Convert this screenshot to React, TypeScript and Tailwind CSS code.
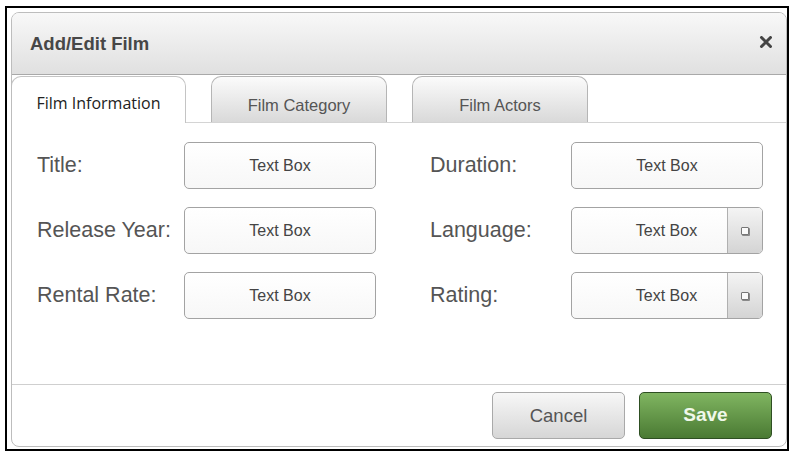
import type { ReactNode } from 'react';

const arial = "font-['Liberation_Sans',Arial,sans-serif]";

function TextBox({ dropdown = false }: { dropdown?: boolean }) {
  return (
    <div className="flex h-[47px] w-[192px] overflow-hidden rounded-[5px] border border-[#a3a3a3] bg-[linear-gradient(180deg,#ffffff,#f7f7f7)]">
      <div
        className={`flex flex-1 items-center justify-center text-[16px] text-[#444] ${arial} ${dropdown ? 'pl-[34px]' : ''}`}
      >
        Text Box
      </div>
      {dropdown && (
        <div className="flex w-[35px] items-center justify-center border-l border-[#b0b0b0] bg-[linear-gradient(180deg,#f4f4f4,#d4d4d4)]">
          <div className="h-[8px] w-[8px] rounded-[1px] border border-[#777] bg-[#fafafa] shadow-[1px_1px_0_#8a8a8a]" />
        </div>
      )}
    </div>
  );
}

function Label({ children }: { children: ReactNode }) {
  return <div className={`flex h-[47px] items-center text-[21.5px] text-[#555] ${arial}`}>{children}</div>;
}

function Tab({ label, active = false }: { label: string; active?: boolean }) {
  if (active) {
    return (
      <div className="relative -mb-px -ml-px flex h-[47px] w-[175px] items-center justify-center rounded-t-[10px] border border-b-0 border-[#c4c4c4] bg-white pt-[6px] font-['Open_Sans',sans-serif] text-[16px] text-[#222]">
        {label}
      </div>
    );
  }
  return (
    <div
      className={`flex h-[46px] w-[176px] items-center justify-center rounded-t-[10px] border border-b-0 border-[#b5b5b5] bg-[linear-gradient(180deg,#fbfbfb,#d9d9d9)] pt-[12px] text-[16.5px] text-[#555] ${arial}`}
    >
      {label}
    </div>
  );
}

export default function App() {
  return (
    <div className="h-[462px] w-[797px] bg-white pl-[5px] pt-[6px]">
      <div className="h-[445px] w-[784px] border-2 border-black pl-[4px] pt-[4px]">
        <div className="flex h-[435px] w-[776px] flex-col overflow-hidden rounded-[8px] border border-[#bdbdbd] bg-white">
          <div className="flex h-[62px] shrink-0 items-center justify-between border-b border-[#a9a9a9] bg-[linear-gradient(180deg,#f8f8f8,#e0e0e0)] pl-[18px] pr-[13px]">
            <span className={`text-[18.5px] font-bold text-[#474747] ${arial}`}>Add/Edit Film</span>
            <svg width="14" height="12" viewBox="0 0 14 12" className="mt-[-4px]">
              <path d="M2.5 1.5 L11.5 10.5 M11.5 1.5 L2.5 10.5" stroke="#444" strokeWidth="3" strokeLinecap="round" />
            </svg>
          </div>

          <div className="flex h-[48px] shrink-0 items-end gap-[25px] border-b border-[#d4d4d4] pt-[1px]">
            <Tab label="Film Information" active />
            <Tab label="Film Category" />
            <Tab label="Film Actors" />
          </div>

          <div className="grid h-[261px] shrink-0 grid-cols-[147px_192px_54px_141px_192px] content-start gap-y-[18px] pl-[25px] pt-[19px]">
            <Label>Title:</Label>
            <TextBox />
            <div />
            <Label>Duration:</Label>
            <TextBox />

            <Label>Release Year:</Label>
            <TextBox />
            <div />
            <Label>Language:</Label>
            <TextBox dropdown />

            <Label>Rental Rate:</Label>
            <TextBox />
            <div />
            <Label>Rating:</Label>
            <TextBox dropdown />
          </div>

          <div className="flex flex-1 items-center justify-end gap-[14px] border-t border-[#cfcfcf] pr-[14px]">
            <button
              type="button"
              className={`h-[47px] w-[133px] rounded-[5px] border border-[#a9a9a9] bg-[linear-gradient(180deg,#f7f7f7,#d6d6d6)] text-[18.5px] text-[#555] ${arial}`}
            >
              Cancel
            </button>
            <button
              type="button"
              className={`h-[47px] w-[133px] rounded-[5px] border border-[#2e4f22] bg-[linear-gradient(180deg,#80b561,#4a7a33)] text-[19px] font-bold text-[#f0f8ea] ${arial}`}
            >
              Save
            </button>
          </div>
        </div>
      </div>
    </div>
  );
}
